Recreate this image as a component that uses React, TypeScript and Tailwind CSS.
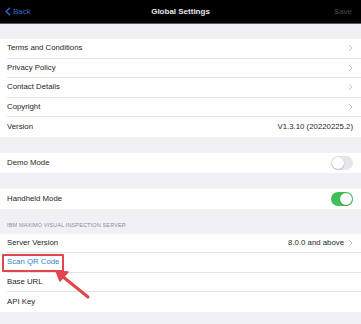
import React from "react";

const font = { fontFamily: "'Liberation Sans', Arial, sans-serif" };

function Chevron() {
  return (
    <svg width="5" height="8" viewBox="0 0 5 8" className="shrink-0">
      <path d="M1 1 L4 4 L1 7" fill="none" stroke="#c4c4c8" strokeWidth="1" />
    </svg>
  );
}

function Toggle({ on }: { on: boolean }) {
  return (
    <div
      className={`relative w-[22px] h-[14px] rounded-full ${on ? "bg-[#3fbf5a]" : "bg-[#e6e6ea]"}`}
    >
      <div
        className={`absolute top-[1px] w-[12px] h-[12px] rounded-full bg-white shadow-[0_0.5px_1.5px_rgba(0,0,0,0.3)] ${on ? "left-[9px]" : "left-[1px]"}`}
      />
    </div>
  );
}

function Row({
  label,
  right,
  chevron,
  last,
  blue,
  h = "h-[19.5px]",
}: {
  label: string;
  right?: React.ReactNode;
  chevron?: boolean;
  last?: boolean;
  blue?: boolean;
  h?: string;
}) {
  return (
    <div className={`flex items-center bg-white pl-[7px] ${h}`}>
      <div
        className={`flex flex-1 items-center h-full pr-[8px] ${last ? "" : "border-b border-[#e4e4e8]"}`}
      >
        <span className={`text-[7.8px] ${blue ? "text-[#2f7fd0]" : "text-[#262626]"}`}>{label}</span>
        <div className="flex-1" />
        {right}
        {chevron && <div className="ml-[4px]"><Chevron /></div>}
      </div>
    </div>
  );
}

export default function App() {
  return (
    <div className="relative w-[361px] h-[324px] bg-[#f0f0f5] overflow-hidden" style={font}>
      {/* Header */}
      <div className="relative h-[24px] bg-black border-b border-[#5a5a5e] flex items-center">
        <div className="flex items-center pl-[5px] gap-[2px] text-[#2d6bc4]">
          <svg width="6" height="9" viewBox="0 0 6 9">
            <path d="M5 0.8 L1.2 4.5 L5 8.2" fill="none" stroke="#2d6bc4" strokeWidth="1.3" />
          </svg>
          <span className="text-[8px]">Back</span>
        </div>
        <div className="absolute inset-0 flex items-center justify-center">
          <span className="text-[8px] font-semibold text-[#e8e8e8]">Global Settings</span>
        </div>
        <div className="flex-1" />
        <span className="text-[8px] text-[#4a4a4a] pr-[9px]">Save</span>
      </div>

      <div className="h-[15px]" />
      <Row label="Terms and Conditions" chevron />
      <Row label="Privacy Policy" chevron />
      <Row label="Contact Details" chevron />
      <Row label="Copyright" chevron />
      <Row
        label="Version"
        last
        right={<span className="text-[7.8px] text-[#262626]">V1.3.10 (20220225.2)</span>}
      />
      <div className="h-[16.5px]" />
      <Row label="Demo Mode" last right={<Toggle on={false} />} />
      <div className="h-[16px]" />
      <Row label="Handheld Mode" last h="h-[20px]" right={<Toggle on />} />
      <div className="h-[25px] flex items-end pl-[7px] pb-[4px]">
        <span className="text-[5.5px] text-[#8e8e93] tracking-[0.15px]">IBM MAXIMO VISUAL INSPECTION SERVER</span>
      </div>
      <Row
        label="Server Version"
        chevron
        right={<span className="text-[7.8px] text-[#262626]">8.0.0 and above</span>}
      />
      <Row label="Scan QR Code" blue />
      <Row label="Base URL" />
      <Row label="API Key" last />

      {/* Annotation */}
      <div className="absolute left-[2px] top-[254px] w-[62px] h-[18px] border-2 border-[#e0464c] rounded-[1px]" />
      <svg className="absolute left-0 top-0" width="361" height="324" viewBox="0 0 361 324">
        <line x1="88" y1="297" x2="62" y2="276" stroke="#e0464c" strokeWidth="3" strokeLinecap="round" />
        <polygon points="56,271 68,272 60,281" fill="#e0464c" stroke="#e0464c" strokeWidth="1.5" strokeLinejoin="round" />
      </svg>
    </div>
  );
}
